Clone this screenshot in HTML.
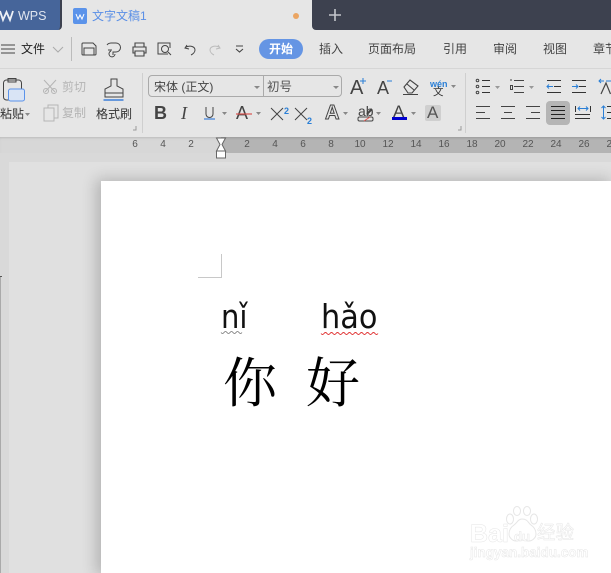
<!DOCTYPE html>
<html lang="zh"><head><meta charset="utf-8"><style>
html,body{margin:0;padding:0;background:#e0e0e0}
#p{position:relative;width:611px;height:573px;overflow:hidden;font-family:"Liberation Sans","Noto Sans CJK SC",sans-serif;color:#333}
#p div{position:absolute}
.t{position:absolute;white-space:nowrap;line-height:14px}
.m{font-size:12px;top:42px;color:#444}
.r{font-size:10px;top:138px;color:#555;width:20px;text-align:center}
.w{color:#fff;-webkit-text-stroke:.5px #e6e6e6}
svg{position:absolute;left:0;top:0}
</style></head><body><div id="p">
<div style="left:0;top:0;width:611px;height:137px;background:#e6e6e6"></div>
<div style="left:312px;top:0;width:299px;height:30px;background:#3d414f;border-bottom-left-radius:4px"></div>
<div style="left:0;top:0;width:60px;height:30px;background:#46659a;border-bottom-right-radius:4px;border-right:2px solid #3d414f"></div>
<div style="left:0;top:68px;width:611px;height:1px;background:#d6d6d6"></div>
<span class="t" style="left:18px;top:9px;font-size:12.5px;color:#dfe5ef">WPS</span>
<span class="t" style="left:92px;top:9px;font-size:12px;color:#5a8fe6">文字文稿1</span>
<span class="t" style="left:21px;top:42px;font-size:12px;color:#222">文件</span>
<div style="left:259px;top:39px;width:44px;height:20px;border-radius:10px;background:#6595e4"></div>
<span class="t" style="left:269px;top:42px;font-size:12px;font-weight:bold;color:#fff">开始</span>
<span class="t m" style="left:319px">插入</span>
<span class="t m" style="left:368px">页面布局</span>
<span class="t m" style="left:443px">引用</span>
<span class="t m" style="left:493px">审阅</span>
<span class="t m" style="left:543px">视图</span>
<span class="t m" style="left:593px">章节</span>
<span class="t" style="left:96px;top:107px;font-size:12px;color:#333">格式刷</span>
<span class="t" style="left:0;top:107px;font-size:12px;color:#333">粘贴</span>
<span class="t" style="left:62px;top:80px;font-size:12px;color:#b5b5b5">剪切</span>
<span class="t" style="left:62px;top:106px;font-size:12px;color:#b5b5b5">复制</span>
<div style="left:148px;top:75px;width:194px;height:22px;box-sizing:border-box;border:1px solid #aaa;border-radius:4px"></div>
<div style="left:263px;top:76px;width:1px;height:20px;background:#aaa"></div>
<span class="t" style="left:154px;top:80px;font-size:12px;color:#444">宋体 (正文)</span>
<span class="t" style="left:267px;top:80px;font-size:12.5px;color:#555">初号</span>
<span class="t" style="left:430px;top:77px;font-size:9px;font-weight:bold;color:#2a7fd6">wén</span>
<span class="t" style="left:433px;top:85px;font-size:10.5px;color:#333">文</span>
<span class="t" style="left:154px;top:106px;font-size:18px;font-weight:bold;color:#444">B</span>
<span class="t" style="left:181px;top:106px;font-size:18px;font-style:italic;font-family:'Liberation Serif',serif;color:#444">I</span>
<div style="left:425px;top:105px;width:16px;height:16px;background:#cfcfcf;border-radius:2px"></div>
<div style="left:546px;top:101px;width:24px;height:24px;background:#b5b5b5;border-radius:4px"></div>
<span class="t" style="left:350px;top:81px;font-size:20px;color:#444">A</span>
<span class="t" style="left:377px;top:81px;font-size:18px;color:#444">A</span>
<span class="t" style="left:236px;top:106px;font-size:18px;color:#444">A</span>
<span class="t" style="left:325px;top:106px;font-size:20px;font-weight:bold;color:#e6e6e6;-webkit-text-stroke:1px #444">A</span>
<span class="t" style="left:358px;top:104px;font-size:14px;color:#444">ab</span>
<span class="t" style="left:393px;top:105px;font-size:17px;color:#444">A</span>
<span class="t" style="left:427px;top:106px;font-size:17px;color:#555">A</span>
<span class="t" style="left:284px;top:104px;font-size:9px;font-weight:bold;color:#2a7fd6">2</span>
<span class="t" style="left:307px;top:114px;font-size:9px;font-weight:bold;color:#2a7fd6">2</span>
<div style="left:0;top:137px;width:611px;height:16px;background:#d7d7d7;box-shadow:inset 0 2px 2px -1px #bbb"></div>
<div style="left:221px;top:137px;width:390px;height:16px;background:#b4b4b4;box-shadow:inset 0 2px 2px -1px #999"></div>
<span class="t r" style="left:125px">6</span><span class="t r" style="left:153px">4</span><span class="t r" style="left:181px">2</span>
<span class="t r" style="left:237px">2</span><span class="t r" style="left:265px">4</span><span class="t r" style="left:293px">6</span><span class="t r" style="left:321px">8</span><span class="t r" style="left:350px">10</span><span class="t r" style="left:378px">12</span><span class="t r" style="left:406px">14</span><span class="t r" style="left:434px">16</span><span class="t r" style="left:462px">18</span><span class="t r" style="left:490px">20</span><span class="t r" style="left:518px">22</span><span class="t r" style="left:546px">24</span><span class="t r" style="left:574px">26</span><span class="t r" style="left:602px">28</span>
<div style="left:0;top:153px;width:611px;height:9px;background:#d9d9d9"></div>
<div style="left:0;top:153px;width:9px;height:420px;background:#d9d9d9"></div>
<div style="left:0;top:276px;width:1px;height:297px;background:#aaa"></div>
<div style="left:0;top:276px;width:2px;height:1px;background:#555"></div>
<div style="left:101px;top:181px;width:510px;height:392px;background:#fff;box-shadow:-3px 0 14px 2px rgba(0,0,0,.2)"></div>
<span class="t" style="left:221px;top:299px;font-size:33px;line-height:36px;font-family:'DejaVu Sans',sans-serif;color:#111;transform:scaleX(.88);transform-origin:left">nǐ</span>
<span class="t" style="left:321px;top:299px;font-size:33px;line-height:36px;font-family:'DejaVu Sans',sans-serif;color:#111;transform:scaleX(.92);transform-origin:left">hǎo</span>
<span class="t" style="left:223px;top:349px;font-size:54px;line-height:62px;font-family:'Noto Serif CJK SC',serif;color:#000">你</span>
<span class="t" style="left:306px;top:349px;font-size:54px;line-height:62px;font-family:'Noto Serif CJK SC',serif;color:#000">好</span>
<span class="t w" style="left:470px;top:522px;font-size:25px;line-height:24px;font-weight:bold">Bai</span>
<span class="t w" style="left:470px;top:545px;font-size:13.5px;line-height:16px;font-weight:bold">jingyan.baidu.com</span>
<svg width="611" height="573" viewBox="0 0 611 573" fill="none" stroke="#444" stroke-width="1">
<path d="M0 11l3 9 3.500-8 3.500 8 3-9" stroke="#eef1f6" stroke-width="1.800"/>
<rect x="73" y="8" width="14" height="16" rx="2" fill="#5b93ea" stroke="none"/>
<path d="M76 14l2 5 2-4 2 4 2-5" stroke="#fff"/>
<circle cx="296" cy="16" r="3" fill="#eba562" stroke="none"/>
<path d="M329 15h12M335 9v12" stroke="#c4c6cc" stroke-width="1.600"/>
<path d="M1 45h14M1 49h14M1 53h14"/>
<path d="M53 47l5 5 5-5" stroke="#aaa"/>
<path d="M71.500 37v24" stroke="#bbb"/>
<path d="M83 43h10l3 3v8a1 1 0 0 1-1 1H83a1 1 0 0 1-1-1V44a1 1 0 0 1 1-1zM84 48h10v7H84z"/>
<path d="M107 45a5 4 0 0 1 4-2h5a4 4 0 0 1 0 9h-3v3M115 54a3 3 0 1 1-4-3M108 50h4"/>
<path d="M135 47v-4h9v4M135 53h-2v-6h13v6h-2M135 51h9v5h-9z" stroke-width="1.100"/>
<path d="M168 54h-10v-11h12v5M171 55l-3-3"/><circle cx="165" cy="49" r="3.500"/>
<path d="M187 45l-2 3 4 1M186 47c5-2 9 0 9 3 0 2-2 4-4 5"/>
<path d="M218 45l2 3-4 1M219 47c-5-2-9 0-9 3 0 2 2 4 4 5" stroke="#bbb"/>
<path d="M236 46h7M236 49l3.500 3 3.500-3" stroke-width="1.100"/>
<path d="M142.500 73v60M465.500 73v60" stroke="#cfcfcf"/>
<rect x="3.500" y="80" width="18" height="20" rx="3"/><path d="M8 82v-3.500h8V82z"/>
<rect x="8.500" y="89" width="16" height="12" rx="2" fill="#d9e4f5" stroke="#5b93ea"/>
<path d="M25 113h5l-2.500 3z" stroke="none" fill="#888"/>
<path d="M44 80l11 12M56 80l-11 12" stroke="#b5b5b5"/><circle cx="46" cy="91" r="2.500" stroke="#b5b5b5"/><circle cx="54" cy="91" r="2.500" stroke="#b5b5b5"/>
<rect x="48" y="105" width="10" height="13" stroke="#b5b5b5"/><rect x="44" y="108" width="10" height="13" fill="#e6e6e6" stroke="#b5b5b5"/>
<path d="M111 79h6v7l6 3v8h-18v-8l6-3z"/><path d="M105 93h18"/><path d="M103.500 100h20" stroke="#3c7fd8" stroke-width="1.400"/>
<path d="M133 130h3v-4" stroke="#999"/>
<path d="M254 86h6l-3 3z" stroke="none" fill="#888"/><path d="M333 86h6l-3 3z" stroke="none" fill="#888"/>
<path d="M360 81h6M363 78v6" stroke="#2a7fd6"/><path d="M387 81h5" stroke="#2a7fd6"/>
<path d="M404 87l6-7 8 6-6 7h-4zM407 84l7 6M403 94.500h15" stroke-width="1.100"/>
<path d="M451 85h5l-2.500 3z" stroke="none" fill="#888"/>
<path d="M204 119h11" stroke="#3c7fd8" stroke-width="1.200"/><path d="M206 107v7a3.500 3.500 0 0 0 7 0v-7"/>
<path d="M222 112h5l-2.500 3z" stroke="none" fill="#888"/><path d="M256 112h5l-2.500 3z" stroke="none" fill="#888"/>
<path d="M236 114h16" stroke="#d9534f" stroke-width="1.200"/>
<path d="M271 108l12 12M283 108l-12 12M295 108l12 12M307 108l-12 12"/>
<path d="M343 112h5l-2.500 3z" stroke="none" fill="#888"/><path d="M376 112h5l-2.500 3z" stroke="none" fill="#888"/><path d="M411 112h5l-2.500 3z" stroke="none" fill="#888"/>
<rect x="358" y="117" width="15" height="4" rx="1.500"/><path d="M364 121l6-4" stroke="#d9534f"/><path d="M367 114l5-5" stroke-width="2"/>
<rect x="392" y="117" width="15" height="3" fill="#0000d0" stroke="none"/>
<path d="M458 130h3v-4" stroke="#999"/>
<circle cx="477.500" cy="80.500" r="1.300"/><circle cx="477.500" cy="86.500" r="1.300"/><circle cx="477.500" cy="92.500" r="1.300"/><path d="M482 80.500h8M482 86.500h8M482 92.500h8" stroke="#333"/>
<path d="M495 86h5l-2.500 3z" stroke="none" fill="#999"/>
<path d="M510 80h2M510.500 85.500h2v4h-2zM514 80.500h10M514 86.500h10M514 92.500h10"/><path d="M529 86h5l-2.500 3z" stroke="none" fill="#999"/>
<path d="M547 80.500h14M554 86.500h7M547 92.500h14" stroke="#333"/><path d="M553 86.500h-6m2-2-2 2 2 2" stroke="#2a7fd6"/>
<path d="M572 80.500h14M579 86.500h7M572 92.500h14" stroke="#333"/><path d="M572 86.500h6m-2-2 2 2-2 2" stroke="#2a7fd6"/>
<path d="M599 81h5m-3-2-2 2 2 2M606 81h5" stroke="#2a7fd6"/><path d="M601 94l5-11 4.500 11" stroke="#444" stroke-width="1.200"/>
<path d="M476 106.500h14M476 112.500h9M476 118.500h14"/>
<path d="M501 106.500h14M504 112.500h8M501 118.500h14"/>
<path d="M526 106.500h14M531 112.500h9M526 118.500h14"/>
<path d="M551 106.500h14M551 110.500h14M551 114.500h14M551 118.500h14" stroke="#222" stroke-width="1.100"/>
<path d="M575.500 106v6M590.500 106v6M575 114.500h15M575 118.500h15" stroke="#333"/><path d="M578 108.500h10m-8-2-2 2 2 2m6-4 2 2-2 2" stroke="#2a7fd6"/>
<path d="M607 106.500h4M607 112.500h4M607 118.500h4" stroke="#333"/><path d="M603.500 106v13m-2-11 2-2 2 2m-4 9 2 2 2-2" stroke="#2a7fd6"/>
<path d="M216.500 138h9l-3.500 6.500 3.500 6.500h-9l3.500-6.500z" fill="#fff" stroke="#666"/>
<rect x="216.500" y="151" width="9" height="7" fill="#fff" stroke="#666"/>
<path d="M198 277.500h23.500V254" stroke="#c8c8c8"/>
<path d="M221 332.500q1.500 2 3 0t3 0 3 0 3 0 3 0 3 0 3 0" stroke="#777" stroke-width=".8"/>
<path d="M321 333.500q1.500 2 3 0t3 0 3 0 3 0 3 0 3 0 3 0 3 0 3 0 3 0 3 0 3 0 3 0 3 0 3 0 3 0 3 0 3 0 3 0" stroke="#e03030" stroke-width=".9"/>
<g stroke="#e6e6e6" fill="#fff">
<ellipse cx="510" cy="519" rx="3.500" ry="5"/><ellipse cx="517" cy="511" rx="3.500" ry="4.500"/><ellipse cx="527" cy="511" rx="3.500" ry="4.500"/><ellipse cx="534" cy="519" rx="3.500" ry="5"/>
<path d="M522 519c-4 0-5 4-8 6s-5 5-5 9 4 7 7 7 4-1 6-1 4 1 7 1 7-3 7-7-2-7-5-9-3-6-9-6z"/>
</g>
</svg>
<span class="t w" style="left:514px;top:530px;font-size:13px;font-weight:bold">du</span>
<span class="t w" style="left:537px;top:523px;font-size:18.5px;line-height:20px">经验</span>
</div></body></html>
